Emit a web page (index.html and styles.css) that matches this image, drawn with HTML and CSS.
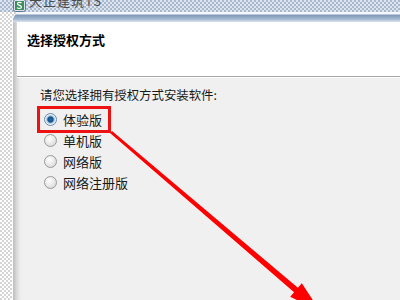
FILE: index.html
```html
<!DOCTYPE html>
<html lang="zh-CN">
<head>
    <meta charset="UTF-8">
    <title>选择授权方式</title>
    <link rel="stylesheet" href="styles.css">
</head>
<body>
    <div class="titlebar">
        <svg class="app-icon" width="13" height="13" viewBox="0 0 13 13">
            <rect x="0.5" y="0.5" width="12" height="12" rx="2" fill="#d9e4ee" stroke="#5b7692"/>
            <rect x="2" y="2" width="9" height="9" fill="#3d8f5a"/>
            <path d="M8.5 4 C7 2.8 4.2 3.2 4.6 5 C5 6.6 8.6 6.4 8.4 8.2 C8.2 9.8 5.2 9.8 4 8.6" fill="none" stroke="#fff" stroke-width="1.3"/>
        </svg>
        <span class="app-title">天正建筑TS</span>
    </div>

    <div class="window">
        <div class="caption-band"></div>
        <div class="header">
            <h1>选择授权方式</h1>
        </div>
        <div class="content">
            <p class="prompt">请您选择拥有授权方式安装软件:</p>
            <div class="options">
                <label class="option marked"><span class="radio checked"></span>体验版</label>
                <label class="option"><span class="radio"></span>单机版</label>
                <label class="option"><span class="radio"></span>网络版</label>
                <label class="option"><span class="radio"></span>网络注册版</label>
            </div>
        </div>
    </div>

    <!-- 标注箭头 -->
    <svg class="arrow" width="400" height="300" viewBox="0 0 400 300">
        <polygon points="112,130.9 297.9,287.7 301.8,283.2 320,311 290.2,296.8 294.1,292.3 110,133.1" fill="#ff0000"/>
    </svg>
</body>
</html>
```

FILE: styles.css
```css
body {
    margin: 0;
    width: 400px;
    height: 300px;
    overflow: hidden;
    position: relative;
    font-family: "Noto Sans CJK SC", "Liberation Sans", sans-serif;
    background-color: #ffffff;
    background-image: repeating-conic-gradient(#d4d4d4 0 25%, #ffffff 0 50%);
    background-size: 4px 4px;
}
.titlebar {
    height: 12px;
    display: flex;
    align-items: flex-start;
    gap: 3px;
    padding-left: 13px;
    overflow: hidden;
    background-color: #dfe6ef;
    background-image: repeating-conic-gradient(#a9b9d0 0 25%, #dde4ee 0 50%);
    background-size: 4px 4px;
}
.app-icon {
    flex: none;
    margin-top: -1px;
}
.app-title {
    font-size: 13px;
    line-height: 13px;
    margin-top: -6px;
    color: #4a4a4a;
    letter-spacing: 1px;
}
.window {
    margin-left: 12px;
    height: 288px;
    border-left: 1px solid #ffffff;
    border-top-left-radius: 9px;
    overflow: hidden;
    background: linear-gradient(to right, #bcbcbc, #dcdcdc 4px, #ececec 7px, #f0f0f0 9px);
}
.caption-band {
    height: 10px;
    background: linear-gradient(#f4f7fb 0, #f4f7fb 2px, #7f98b8 3px, #a3b7cf 7px, #dbe4ee 10px);
}
.header {
    margin-left: 4px;
    height: 54px;
    background-color: #ffffff;
    border-bottom: 1px solid #a8a8a8;
    box-shadow: 0 1px 0 #ffffff;
}
.header h1 {
    margin: 0;
    padding: 10px 0 0 10px;
    font-size: 13px;
    line-height: 15px;
    font-weight: bold;
    color: #000000;
}
.content {
    padding: 10px 0 0 27px;
}
.prompt {
    margin: 0;
    font-size: 12.4px;
    line-height: 16px;
    color: #1a1a1a;
}
.options {
    display: flex;
    flex-direction: column;
    align-items: flex-start;
    margin-top: 6px;
}
.option {
    display: flex;
    align-items: center;
    gap: 6px;
    width: 64px;
    height: 21px;
    padding-left: 4px;
    font-size: 13px;
    white-space: nowrap;
    color: #1a1a1a;
}
.option.marked {
    outline: 3px solid #ee1111;
}
.radio {
    flex: none;
    width: 11px;
    height: 11px;
    border: 1px solid #9a9a9a;
    border-radius: 50%;
    background: radial-gradient(circle at 40% 35%, #ffffff, #e4e4e4 60%, #cfcfcf);
}
.radio.checked {
    border-color: #6e8aa8;
    background: radial-gradient(circle, #1f6db8 0, #13507f 2.6px, #9cc0e0 3.6px, #e9f1f8 5px);
}
.arrow {
    position: absolute;
    left: 0;
    top: 0;
}
```
